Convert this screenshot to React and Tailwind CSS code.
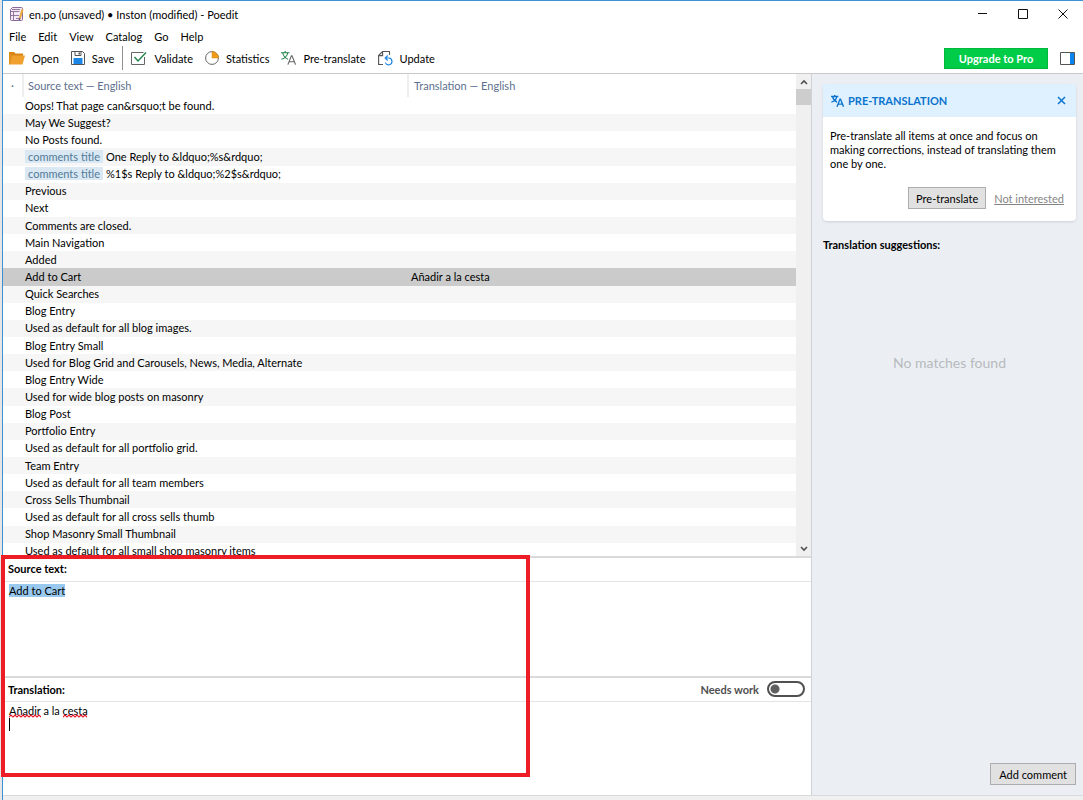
import React, { useState } from 'react';

const entries = [
  { source: 'Oops! That page can&rsquo;t be found.' },
  { source: 'May We Suggest?' },
  { source: 'No Posts found.' },
  { context: 'comments title', source: 'One Reply to &ldquo;%s&rdquo;' },
  { context: 'comments title', source: '%1$s Reply to &ldquo;%2$s&rdquo;' },
  { source: 'Previous' },
  { source: 'Next' },
  { source: 'Comments are closed.' },
  { source: 'Main Navigation' },
  { source: 'Added' },
  { source: 'Add to Cart', translation: 'Añadir a la cesta' },
  { source: 'Quick Searches' },
  { source: 'Blog Entry' },
  { source: 'Used as default for all blog images.' },
  { source: 'Blog Entry Small' },
  { source: 'Used for Blog Grid and Carousels, News, Media, Alternate' },
  { source: 'Blog Entry Wide' },
  { source: 'Used for wide blog posts on masonry' },
  { source: 'Blog Post' },
  { source: 'Portfolio Entry' },
  { source: 'Used as default for all portfolio grid.' },
  { source: 'Team Entry' },
  { source: 'Used as default for all team members' },
  { source: 'Cross Sells Thumbnail' },
  { source: 'Used as default for all cross sells thumb' },
  { source: 'Shop Masonry Small Thumbnail' },
  { source: 'Used as default for all small shop masonry items' },
];

const menus = ['File', 'Edit', 'View', 'Catalog', 'Go', 'Help'];

const AppIcon = () => (
  <svg width="14" height="16" viewBox="0 0 14 16" fill="none" stroke="#8a6b98">
    <path d="M2.5 1.5h9a1 1 0 0 1 1 1v11a1 1 0 0 1-1 1H1.5a1 1 0 0 1-1-1v-10z" fill="#f3eaf6" />
    <path d="M1 5.500h8.500M1 9.500h8M3.500 5.500v9M2 3.500h8M6 12.500h3" strokeWidth="0.900" />
    <path d="M12.600 3.200 9.800 12.400" stroke="#e9a83a" strokeWidth="2" />
    <path d="m9.500 12-.3 2 1.300-1.400" stroke="#4b3a55" strokeWidth="0.800" />
  </svg>
);

const OpenIcon = () => (
  <svg width="16" height="14" viewBox="0 0 16 14">
    <path d="M0 2.500V1h5l1.500 1.500H14V5H3.200L0 12z" fill="#d98416" />
    <path d="M3.500 4.500H16L13.500 13.500H0.500z" fill="#f0a02e" />
    <path d="M0 2v11.500h1L3.700 4.700" fill="#e0901f" />
  </svg>
);

const SaveIcon = () => (
  <svg width="14" height="14" viewBox="0 0 14 14">
    <path d="M.5.5h11l2 2v11H.5z" fill="#fff" stroke="#555" />
    <path d="M4 .5h6v4H4z" fill="#fff" stroke="#555" />
    <path d="M7.500 1.500h1.500v2H7.500z" fill="#555" />
    <path d="M2.500 7h9v6h-9z" fill="#1b86e5" />
  </svg>
);

const ValidateIcon = () => (
  <svg width="16" height="14" viewBox="0 0 16 14" fill="none">
    <path d="M12.500 1.500H.5v12h13V6" stroke="#666" />
    <path d="m3.500 6 3.500 4L15 1.500" stroke="#21834a" strokeWidth="1.400" />
  </svg>
);

const StatisticsIcon = () => (
  <svg width="14" height="14" viewBox="0 0 14 14">
    <circle cx="7" cy="7" r="6.400" fill="#fff" stroke="#666" />
    <path d="M7 .5A6.500 6.500 0 0 1 13.500 7H7z" fill="#f09a1a" stroke="#e08a10" strokeWidth="0.500" />
  </svg>
);

const TranslateIcon = ({ className, first = 'currentColor', second = 'currentColor', weight = 1.2 }) => (
  <svg className={className} viewBox="0 0 15 14" fill="none" strokeWidth={weight}>
    <path d="M0 1.700h8.500M4.200 0v1.700M1.700 2c.6 2.800 2.600 5.200 5.300 6.200M6.700 2C6.200 4.700 3.700 7.500.4 8.300" stroke={first} />
    <path d="m6.900 13.600 3.500-8.800h.6l3.500 8.800M8.200 10.700h5" stroke={second} />
  </svg>
);

const UpdateIcon = () => (
  <svg width="15" height="15" viewBox="0 0 15 15" fill="none">
    <path d="M5 13.500H.6v-9l4-4h6.900V4M.6 4.600h4V.5" stroke="#555" strokeWidth="1.100" />
    <path d="M7.400 7H10.800a3.400 3.400 0 1 1-3.400 4.600M9.700 4.500 7.200 7l2.500 2.500" stroke="#1b86e5" strokeWidth="1.200" />
  </svg>
);

const SidebarIcon = () => (
  <svg width="15" height="13" viewBox="0 0 15 13">
    <path d="M.5.5h14v12H.5z" fill="#fff" stroke="#555" />
    <path d="M10 1h4v11h-4z" fill="#0a84f0" />
  </svg>
);

const Squiggle = ({ id, className }) => (
  <svg className={className} height="4">
    <pattern id={id} width="4" height="4" patternUnits="userSpaceOnUse">
      <path d="M-1 4 2 1l3 3" fill="none" stroke="#e81123" strokeWidth="1.200" />
    </pattern>
    <rect width="100%" height="4" fill={`url(#${id})`} />
  </svg>
);

const ToolButton = ({ icon, label }) => (
  <button type="button" className="flex items-center gap-[7px]">
    {icon}
    {label}
  </button>
);

const TitleBar = () => (
  <header className="flex h-[26px] items-center pl-[7px]">
    <AppIcon />
    <h1 className="ml-[5px] flex-1">en.po (unsaved) • Inston (modified) - Poedit</h1>
    <button type="button" aria-label="Minimize" className="flex h-full w-10 items-center justify-center">
      <svg width="10" height="10" stroke="#111"><path d="M0 4.500h9" /></svg>
    </button>
    <button type="button" aria-label="Maximize" className="flex h-full w-10 items-center justify-center">
      <svg width="10" height="10" stroke="#111" fill="none"><path d="M.5.500h9v9h-9z" /></svg>
    </button>
    <button type="button" aria-label="Close" className="flex h-full w-10 items-center justify-center">
      <svg width="10" height="10" stroke="#111"><path d="m.5.500 9 9m0-9-9 9" /></svg>
    </button>
  </header>
);

const Toolbar = () => (
  <div className="flex h-[29px] items-center gap-3 border-b border-[#c9c9c9] pr-2 pb-0.5 pl-1.5">
    <ToolButton icon={<OpenIcon />} label="Open" />
    <ToolButton icon={<SaveIcon />} label="Save" />
    <div className="-mx-1 h-6 w-px bg-[#8f8f8f]" />
    <ToolButton icon={<ValidateIcon />} label="Validate" />
    <ToolButton icon={<StatisticsIcon />} label="Statistics" />
    <ToolButton
      icon={<TranslateIcon className="h-[14px] w-[15px]" first="#21834a" second="#666" weight={1.1} />}
      label="Pre-translate"
    />
    <ToolButton icon={<UpdateIcon />} label="Update" />
    <button type="button" className="ml-auto h-[21px] w-[104px] border border-[#00b83c] bg-[#00cc48] font-bold text-white">
      Upgrade to Pro
    </button>
    <button type="button" aria-label="Toggle sidebar">
      <SidebarIcon />
    </button>
  </div>
);

const EntryList = ({ selected, onSelect }) => (
  <div className="flex min-h-0 flex-1 border-b-2 border-[#dadada]">
    <div className="min-w-0 flex-1 overflow-hidden">
      <table className="h-[486px] w-full table-fixed border-collapse text-left">
        <thead>
          <tr className="h-[23px] text-[#5d6f8f]">
            <th className="w-5 border-r-2 border-[#eee] p-0 text-center font-normal">·</th>
            <th className="w-[385px] border-r-2 border-[#eee] py-0 pl-1 font-normal">Source text — English</th>
            <th className="py-0 pr-0 pl-[5px] font-normal">Translation — English</th>
          </tr>
        </thead>
        <tbody>
          {entries.map((entry, i) => (
            <tr
              key={i}
              onClick={() => onSelect(i)}
              className={i === selected ? 'bg-[#cbcbcb]' : 'bg-white even:bg-[#f6f6f6]'}
            >
              <td className="p-0" />
              <td className="truncate py-0 pr-0 pl-0.5 leading-4">
                {entry.context && (
                  <span className="mr-[3px] inline-block bg-[#d9e8f2] px-[3px] leading-[13px] text-[#527a99]">{entry.context}</span>
                )}
                {entry.source}
              </td>
              <td className="p-0 pl-[3px] leading-4">{entry.translation}</td>
            </tr>
          ))}
        </tbody>
      </table>
    </div>
    <div className="flex w-[15px] flex-col items-center bg-[#f0f0f0]">
      <button type="button" aria-label="Scroll up" className="flex h-[15px] w-full items-center justify-center">
        <svg width="8" height="6" fill="none" stroke="#505050" strokeWidth="1.600"><path d="m1 5 3-3 3 3" /></svg>
      </button>
      <div className="h-4 w-full bg-[#cdcdcd]" />
      <button type="button" aria-label="Scroll down" className="mt-auto flex h-[15px] w-full items-center justify-center">
        <svg width="8" height="6" fill="none" stroke="#505050" strokeWidth="1.600"><path d="m1 1 3 3 3-3" /></svg>
      </button>
    </div>
  </div>
);

const Editor = () => {
  const [text, setText] = useState('Añadir a la cesta\n');
  const [needsWork, setNeedsWork] = useState(false);

  return (
    <section className="relative">
      <h2 className="h-6 border-b border-[#e4e4e4] px-[5px] leading-[22px] font-bold">Source text:</h2>
      <div className="h-[94px] px-1.5 pt-px">
        <mark className="bg-[#99c9ef] text-inherit">Add to Cart</mark>
      </div>
      <div className="flex h-[26px] items-center justify-between border-t-2 border-b border-t-[#dadada] border-b-[#e4e4e4] pr-1.5 pb-px pl-[5px]">
        <label htmlFor="translation" className="font-bold">Translation:</label>
        <label className="flex items-center gap-2 font-bold text-[#505050]">
          Needs work
          <input
            type="checkbox"
            checked={needsWork}
            onChange={(e) => setNeedsWork(e.target.checked)}
            className="h-4 w-[38px] appearance-none rounded-full border-2 border-[#505050] bg-[radial-gradient(circle_at_6px_6px,#606060_4px,transparent_5px)] checked:bg-[radial-gradient(circle_at_28px_6px,#606060_4px,transparent_5px)]"
          />
        </label>
      </div>
      <div className="relative h-[93px]">
        <textarea
          id="translation"
          value={text}
          onChange={(e) => setText(e.target.value)}
          spellCheck={false}
          className="block h-full w-full resize-none px-1.5 pt-0.5 leading-[14px] outline-none"
        />
        {/* spelling marks and the text cursor */}
        <Squiggle id="wave-a" className="absolute top-3 left-1.5 w-8" />
        <Squiggle id="wave-b" className="absolute top-3 left-[60px] w-6" />
        <span className="absolute top-4 left-1.5 h-[13px] w-px bg-black" />
      </div>
      {/* highlighted area */}
      <div className="pointer-events-none absolute -top-[3px] -left-0.5 h-[222px] w-[529px] border-4 border-[#ee1c25]" />
    </section>
  );
};

const Sidebar = () => (
  <aside className="flex w-[272px] flex-col border-l border-[#cfd2d6] bg-[#ebeff4] pt-[10px] pr-[7px] pb-[10px] pl-[11px]">
    <section className="rounded-sm bg-white shadow-sm">
      <div className="flex h-[33px] items-center gap-1 bg-[#dff1ff] px-2 text-[#0a74cf]">
        <TranslateIcon className="h-3 w-[13px]" weight={1.6} />
        <h2 className="flex-1 font-bold">PRE-TRANSLATION</h2>
        <button type="button" aria-label="Dismiss" className="px-0.5">
          <svg width="9" height="9" stroke="currentColor" strokeWidth="1.500"><path d="m1 1 7 7m0-7-7 7" /></svg>
        </button>
      </div>
      <p className="pt-3 pr-3 pl-[7px] leading-[14px]">
        Pre-translate all items at once and focus on making corrections, instead of translating them one by one.
      </p>
      <div className="flex items-center justify-end gap-2 px-3 pt-4 pb-3">
        <button type="button" className="h-[22px] border border-[#adadad] bg-[#e1e1e1] px-[7px]">Pre-translate</button>
        <a href="#" className="text-[#848484] underline">Not interested</a>
      </div>
    </section>
    <h2 className="mt-4 font-bold">Translation suggestions:</h2>
    <p className="mt-[103px] text-center text-[14px] text-[#b7babd]">No matches found</p>
    <button type="button" className="mt-auto h-[22px] self-end border border-[#adadad] bg-[#e1e1e1] px-2">Add comment</button>
  </aside>
);

const App = () => {
  const [selected, setSelected] = useState(10);

  return (
    <div className="h-screen bg-[#e6e6e6] pl-0.5">
      <div className="flex h-full flex-col border-t border-l border-[#3c91d6] bg-white font-[Lato,'Open_Sans',sans-serif] text-[11px] leading-[15px] text-black">
        <TitleBar />
        <nav className="flex h-[18px] items-center gap-3 pl-1.5">
          {menus.map((menu) => (
            <button key={menu} type="button">{menu}</button>
          ))}
        </nav>
        <Toolbar />
        <main className="flex min-h-0 flex-1">
          <div className="flex min-w-0 flex-1 flex-col">
            <EntryList selected={selected} onSelect={setSelected} />
            <Editor />
          </div>
          <Sidebar />
        </main>
        <footer className="h-[5px] border-t border-[#d7d9dc] bg-[#f0f0f0]" />
      </div>
    </div>
  );
};

export default App;
